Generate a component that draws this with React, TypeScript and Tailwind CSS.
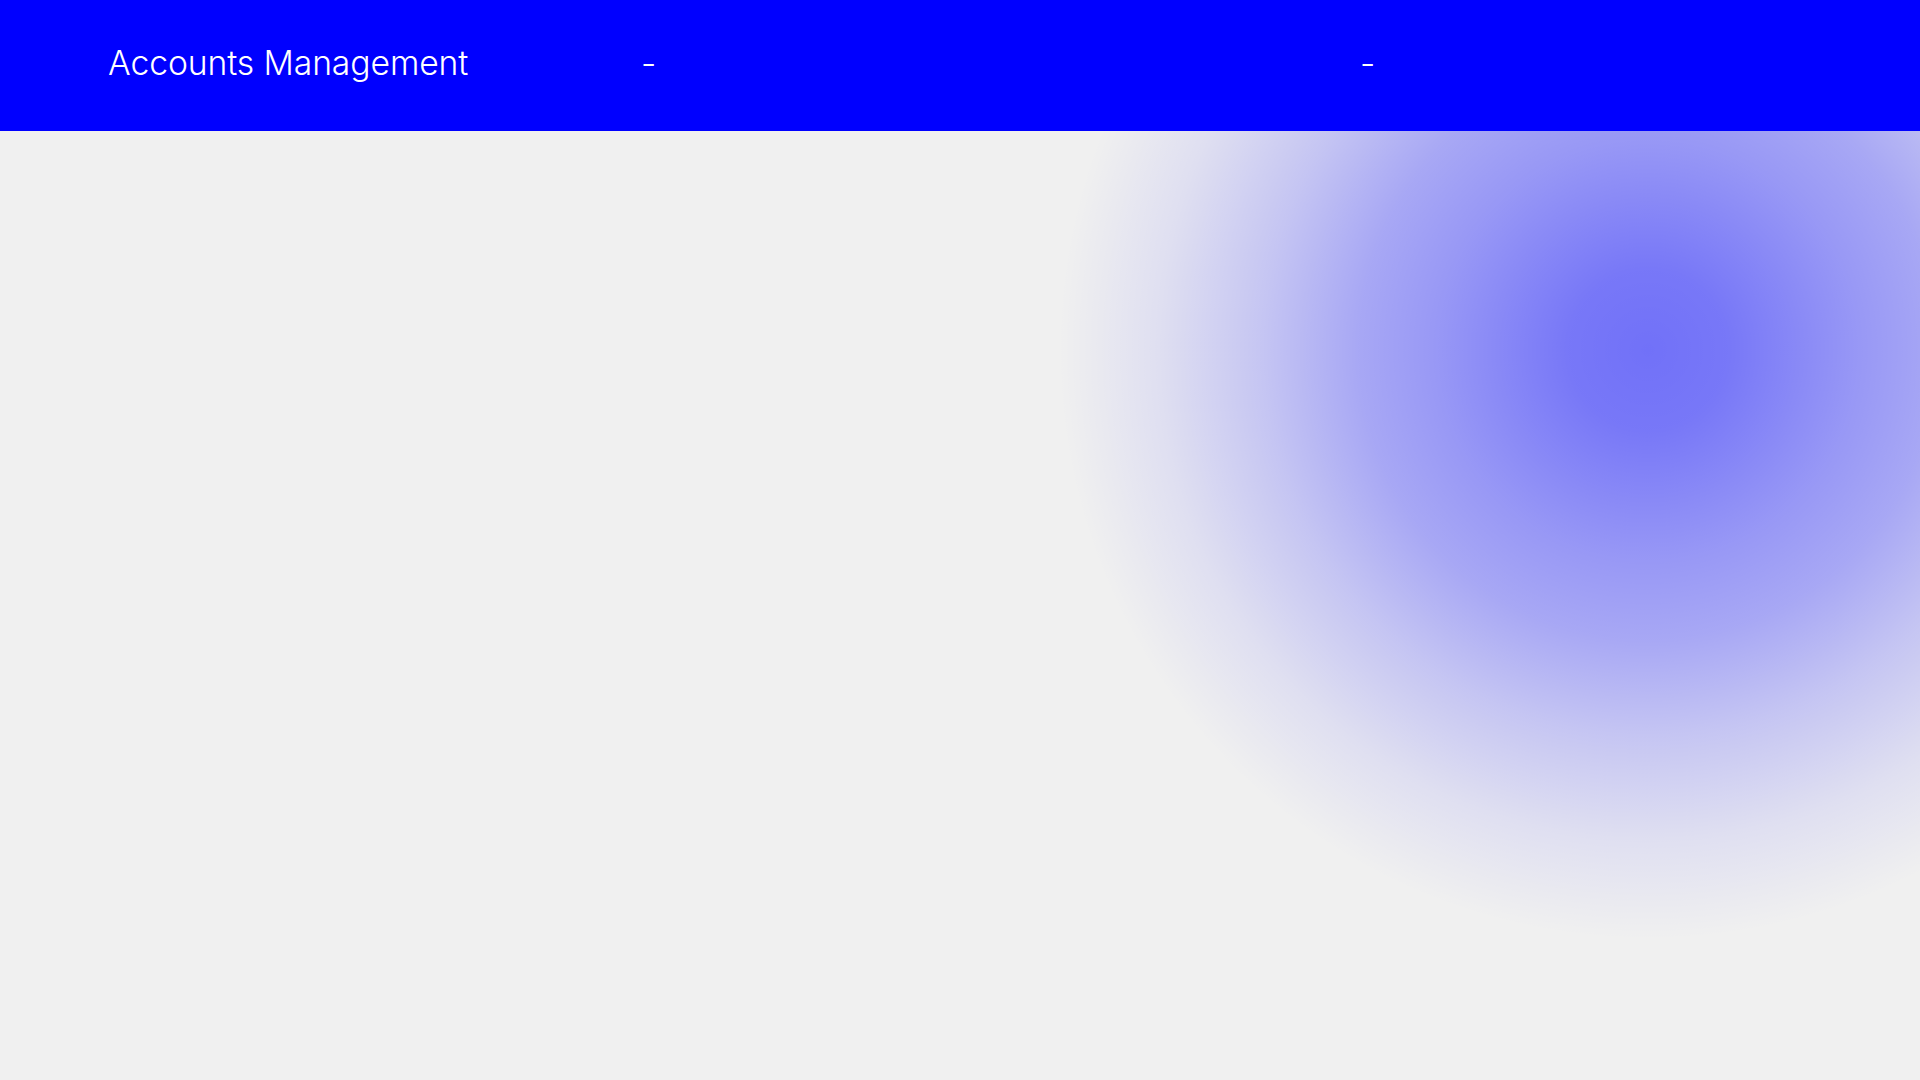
export default function App() {
  return (
    <div className="flex h-screen flex-col bg-[#f0f0f0] font-['Inter',sans-serif]">
      {/* Top bar */}
      <header className="grid h-[131px] shrink-0 grid-cols-[533px_719px_1fr] items-center bg-[#0000ff] pb-[6px] pl-[108px] text-[33.7px] font-light leading-none text-white">
        <h1 className="tracking-[-0.1px]">Accounts Management</h1>
        <span>-</span>
        <span>-</span>
      </header>

      {/* Body with glow */}
      <main className="flex-1 bg-[radial-gradient(circle_at_1648px_219px,rgba(0,0,255,0.53)_0px,rgba(0,0,255,0.5)_80px,rgba(0,0,255,0.37)_210px,rgba(0,0,255,0.3)_290px,rgba(0,0,255,0.18)_385px,rgba(0,0,255,0.07)_490px,rgba(0,0,255,0)_590px)]" />
    </div>
  );
}
